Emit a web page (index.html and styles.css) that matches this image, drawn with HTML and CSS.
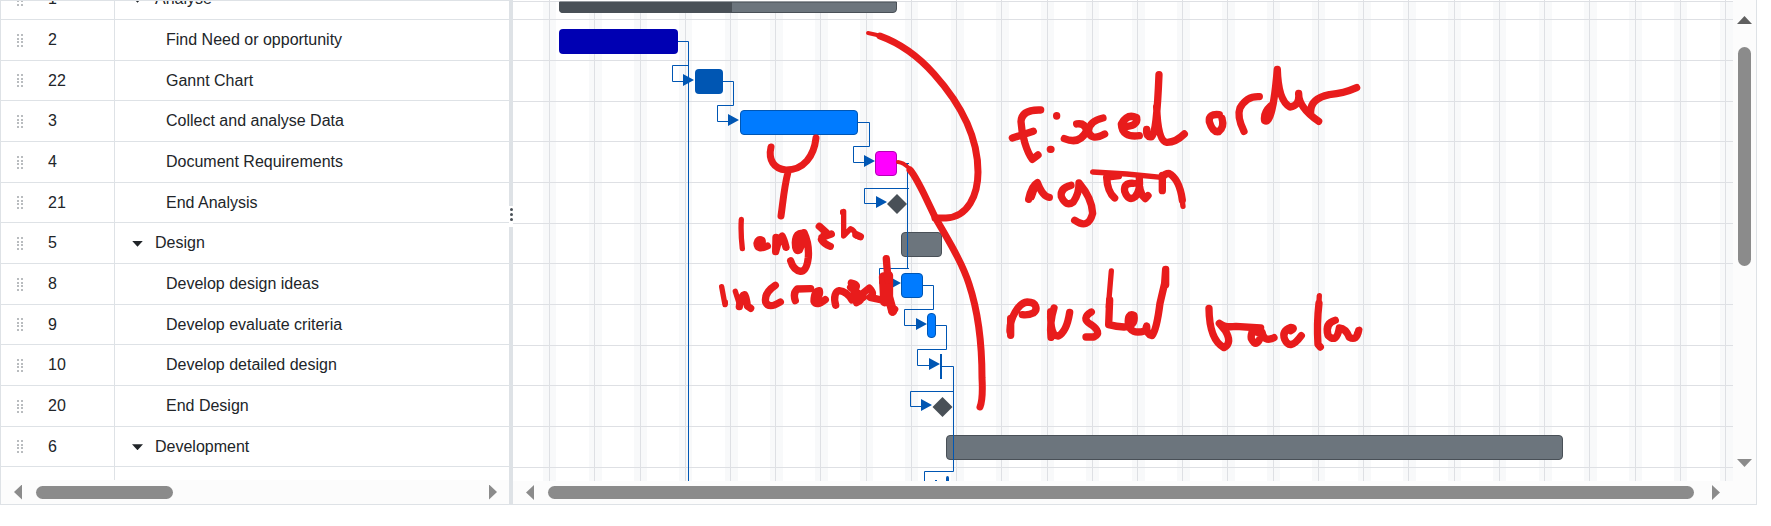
FILE: index.html
```html
<!DOCTYPE html>
<html lang="en">
<head>
<meta charset="utf-8">
<title>Gantt</title>
<link rel="stylesheet" href="styles.css">
</head>
<body>
<svg class="defs" width="0" height="0" aria-hidden="true">
  <symbol id="grip" viewBox="0 0 7 13"><path d="M0 0h2v2H0zM4 0h2v2H4zM0 4h2v2H0zM4 4h2v2H4zM0 7h2v2H0zM4 7h2v2H4zM0 11h2v2H0zM4 11h2v2H4z"/></symbol>
</svg>
<main class="gantt">
  <section class="tree">
    <div class="tree-view">
      <table class="tasks" aria-label="Tasks">
        <tbody>
          <tr><td class="drag"><svg class="grip"><use href="#grip"/></svg></td><td class="id">1</td><td class="name"><button class="toggle" aria-label="Collapse"></button>Analyse</td></tr>
          <tr><td class="drag"><svg class="grip"><use href="#grip"/></svg></td><td class="id">2</td><td class="name leaf">Find Need or opportunity</td></tr>
          <tr><td class="drag"><svg class="grip"><use href="#grip"/></svg></td><td class="id">22</td><td class="name leaf">Gannt Chart</td></tr>
          <tr><td class="drag"><svg class="grip"><use href="#grip"/></svg></td><td class="id">3</td><td class="name leaf">Collect and analyse Data</td></tr>
          <tr><td class="drag"><svg class="grip"><use href="#grip"/></svg></td><td class="id">4</td><td class="name leaf">Document Requirements</td></tr>
          <tr><td class="drag"><svg class="grip"><use href="#grip"/></svg></td><td class="id">21</td><td class="name leaf">End Analysis</td></tr>
          <tr><td class="drag"><svg class="grip"><use href="#grip"/></svg></td><td class="id">5</td><td class="name"><button class="toggle" aria-label="Collapse"></button>Design</td></tr>
          <tr><td class="drag"><svg class="grip"><use href="#grip"/></svg></td><td class="id">8</td><td class="name leaf">Develop design ideas</td></tr>
          <tr><td class="drag"><svg class="grip"><use href="#grip"/></svg></td><td class="id">9</td><td class="name leaf">Develop evaluate criteria</td></tr>
          <tr><td class="drag"><svg class="grip"><use href="#grip"/></svg></td><td class="id">10</td><td class="name leaf">Develop detailed design</td></tr>
          <tr><td class="drag"><svg class="grip"><use href="#grip"/></svg></td><td class="id">20</td><td class="name leaf">End Design</td></tr>
          <tr><td class="drag"><svg class="grip"><use href="#grip"/></svg></td><td class="id">6</td><td class="name"><button class="toggle" aria-label="Collapse"></button>Development</td></tr>
          <tr><td class="drag"></td><td class="id"></td><td class="name"></td></tr>
        </tbody>
      </table>
    </div>
    <div class="hbar tree-bar">
      <button class="arrow left" aria-label="Scroll left"></button>
      <div class="track"><div class="thumb short"></div></div>
      <button class="arrow right" aria-label="Scroll right"></button>
    </div>
  </section>

  <div class="splitter"><div class="handle"><i></i><i></i><i></i></div></div>

  <section class="chart">
    <div class="chart-main">
      <div class="chart-view">
        <svg class="canvas" width="1223" height="481" viewBox="513 0 1223 481" role="img" aria-label="Gantt chart">
          <path class="weekend" d="M549.5 2V481M595.5 2V481M640.5 2V481M685.5 2V481M731.5 2V481M776.5 2V481M821.5 2V481M866.5 2V481M911.5 2V481M957.5 2V481M1002.5 2V481M1047.5 2V481M1092.5 2V481M1138.5 2V481M1183.5 2V481M1228.5 2V481M1273.5 2V481M1318.5 2V481M1364.5 2V481M1409.5 2V481M1454.5 2V481M1499.5 2V481M1545.5 2V481M1590.5 2V481M1635.5 2V481M1680.5 2V481M1726.5 2V481"/>
          <path class="line" d="M513 1.5H1736.5V0M513 19.5H1733M513 60.5H1733M513 101.5H1733M513 141.5H1733M513 182.5H1733M513 223.5H1733M513 263.5H1733M513 304.5H1733M513 345.5H1733M513 385.5H1733M513 426.5H1733M513 467.5H1733"/>
          <path class="line" d="M549.5 0V481M594.5 0V481M640.5 0V481M685.5 0V481M730.5 0V481M775.5 0V481M820.5 0V481M866.5 0V481M911.5 0V481M956.5 0V481M1001.5 0V481M1047.5 0V481M1092.5 0V481M1137.5 0V481M1182.5 0V481M1227.5 0V481M1273.5 0V481M1318.5 0V481M1363.5 0V481M1408.5 0V481M1454.5 0V481M1499.5 0V481M1544.5 0V481M1589.5 0V481M1635.5 0V481M1680.5 0V481M1725.5 0V481"/>

          <path class="summary" d="M559.5 2V9q0 3.500 3.500 3.500H893q3.500 0 3.500 -3.500V2z"/>
          <path class="progress" d="M559 2V9q0 4 4 4H732V2z"/>
          <path class="cover" d="M555 0H900V1H555z"/>
          <rect class="navy" x="559" y="29" width="119" height="25" rx="4"/>
          <rect class="blue-dark" x="695" y="69" width="28" height="25" rx="4"/>
          <rect class="task" x="740.5" y="110.5" width="117" height="24" rx="3.5"/>
          <rect class="pink" x="875.5" y="151.5" width="21" height="24" rx="3.5"/>
          <path class="milestone" d="M897 194l10 10l-10 10l-10-10z"/>
          <rect class="summary" x="901.5" y="232.5" width="40" height="24" rx="3.5"/>
          <rect class="task" x="901.5" y="273.5" width="21" height="24" rx="3.5"/>
          <rect class="task" x="927.5" y="313.5" width="8" height="24" rx="3.5"/>
          <rect class="blue-dark" x="940" y="354" width="2" height="25"/>
          <path class="milestone" d="M942.5 397l10 10l-10 10l-10-10z"/>
          <rect class="summary" x="946.5" y="435.5" width="616" height="24" rx="3.5"/>
          <path class="blue-dark" d="M946 481v-3q0-2 1.5-2t1.5 2v3z"/>

          <path class="link" d="M678 41.5H688.5V481M688.5 65.5H672.5V81.5H684M723 81.5H733.5V105.5H717.5V121.5H729M858 122.5H869.5V146.5H853.5V162.5H865M897 163.5H909M907.5 163V268M909 188.5H864.5V203.5H877M909 268.5H879.5V283.5H891M923 285.5H933.5V309.5H904.5V325.5H917M936 325.5H946.5V349.5H917.5V365.5H930M942 366.5H953.5V471.5H924.5V481M953.5 391.5H910.5V406.5H922M935 480.5h2"/>
          <path class="tip" d="M683 74l11 6l-11 6zM728 114l11 6l-11 6zM864 155l11 6l-11 6zM876 196l11 6l-11 6zM890 277l11 6l-11 6zM916 318l11 6l-11 6zM929 358l11 6l-11 6zM921 399l11 6l-11 6z"/>

          <g class="ink">
            <path class="taper" d="M868 33C880 35 890 39 899 44"/>
            <path d="M880 36C902 44 918 56 934 74C960 103 978 136 978 172C978 195 968 217 946 218H935"/>
            <path class="taper" d="M898 162C906 163 911 170 916 178"/>
            <path d="M910 170C914 174 919 184 924 194L935 217C948 240 962 262 969 284C979 314 982 348 982 378C983 396 982 402 980 407"/>
            <path d="M771 147C768 160 774 169 786 170C804 170 814 156 816 138M788 172C784 188 783 202 781 216"/>
          </g>
          <g class="ink marks" transform="translate(700 200) scale(.3333)">
            <path class="thin" d="M124 58C122 90 124 120 127 146M428 35V38M431 34L431 108L452 86Q464 90 468 108L482 112"/>
            <path d="M172 134Q190 134 186 121Q175 114 171 130Q172 152 202 138M228 112L227 155Q237 112 246 108Q252 118 258 142"/>
            <path d="M312 100Q287 95 286 128Q286 156 298 150Q310 126 312 98Q328 132 325 172Q320 214 302 214Q280 210 272 182M294 108V140"/>
            <path d="M358 79L378 97L364 118Q372 132 391 139M366 112L394 102M468 104L481 110"/>
            <path class="thin" d="M65 260L75 314M76 306V312M106 274L120 318"/>
            <path d="M118 320Q122 286 134 284Q140 296 142 318L152 325M226 256Q192 278 197 306Q206 328 241 306M286 302Q278 280 292 267L332 266"/>
            <path d="M344 292Q362 290 358 272Q342 274 342 304Q350 320 376 299M407 316C400 290 406 274 418 272Q440 274 456 300M454 249Q480 254 462 270L470 308Q486 302 486 282L508 264Q526 282 510 292L545 300M452 262L490 292"/>
            <path class="bold" d="M550 230L554 306M566 226L566 290L578 334"/>
            <path d="M559 176L564 240M577 336L584 328"/>
          </g>
          <g class="ink marks" transform="translate(990 50) scale(.3333)">
            <path d="M152 180Q95 178 93 215C95 256 110 305 127 328L144 315M67 264L130 244M200 197v1M181 298h2"/>
            <path d="M260 222Q285 218 290 242Q270 285 223 266M339 204Q300 212 295 242Q302 275 344 252"/>
            <path d="M398 230Q446 230 440 203Q412 190 394 222Q396 264 448 257M470 238Q468 264 485 260Q500 252 507 74M500 170Q503 274 530 277Q556 278 583 252"/>
            <path d="M688 194Q655 190 658 215Q668 248 686 245Q704 232 696 205M762 244Q740 200 750 174Q770 138 808 140"/>
            <path d="M842 168Q820 188 824 212Q848 226 862 58Q865 152 900 171Q930 168 926 130Q925 172 986 214M962 188Q960 146 1018 134Q1062 130 1100 113"/>
            <path d="M116 448Q124 408 142 398Q158 440 178 442M124 440L134 412M243 406Q210 414 214 440Q228 472 250 456Q268 430 267 399Q306 445 308 490Q295 540 254 511"/>
            <path class="thin" d="M308 366L410 372L515 382M350 384L388 380"/>
            <path d="M350 382Q352 425 374 444M430 400Q400 398 404 424Q415 456 436 440Q452 420 448 385Q446 430 466 446L474 437M517 422V382Q526 370 536 370Q568 386 577 450M517 390V376"/>
            <path class="thin" d="M574 430L579 469"/>
          </g>
          <g class="ink marks" transform="translate(990 240) scale(.3333)">
            <path d="M62 286V235M60 275C58 235 86 188 112 186C140 186 144 208 130 219Q116 226 97 224"/>
            <path d="M192 204Q178 250 183 292M182 215Q180 290 205 288Q230 275 239 217M304 216Q272 235 302 253Q338 278 312 291H288"/>
            <path class="thin" d="M364 93L355 200"/>
            <path d="M359 180L356 254Q380 260 402 261Q438 258 432 226Q412 218 415 252Q422 286 466 272L470 258Q470 285 486 287Q500 270 510 190L524 130L527 88M527 92V134"/>
            <path d="M657 205Q658 300 702 323Q728 310 706 272L688 250Q704 264 738 259L812 264Q780 270 784 296Q802 332 816 276Q822 308 852 293M786 272L812 280"/>
            <path d="M902 272Q918 264 902 262Q875 272 884 298Q900 334 934 287M987 190Q980 250 984 313L991 321M1036 241Q1004 250 1014 286Q1040 312 1048 264Q1068 266 1078 292Q1100 304 1106 272"/>
            <path class="thin" d="M988 167L986 210M1100 280L1109 268"/>
          </g>
        </svg>
      </div>
      <div class="vbar">
        <button class="arrow up" aria-label="Scroll up"></button>
        <div class="vtrack"><div class="vthumb"></div></div>
        <button class="arrow down" aria-label="Scroll down"></button>
      </div>
    </div>
    <div class="hbar chart-bar">
      <button class="arrow left" aria-label="Scroll left"></button>
      <div class="track"><div class="thumb"></div></div>
      <button class="arrow right" aria-label="Scroll right"></button>
    </div>
  </section>
</main>
</body>
</html>
```
FILE: styles.css
```css
* { box-sizing: border-box; }
body {
  margin: 0;
  background: #fff;
  color: #212529;
  font: 16px/24px "Liberation Sans", Arial, sans-serif;
}
button { border: 0; padding: 0; background: none; }
.defs { display: none; }

.gantt {
  display: flex;
  margin-right: 14px;
  border: 1px solid #dee2e6;
  border-top: 0;
}

/* task tree */
.tree { width: 508px; flex: none; border-top: 1px solid #dee2e6; }
.tree-view { height: 479px; overflow: hidden; }
.tasks {
  width: 100%;
  margin-top: -22px;
  border-collapse: separate;
  border-spacing: 0;
  table-layout: fixed;
}
.tasks tr { height: 41px; }
.tasks tr:nth-child(3n) { height: 40px; }
.tasks td { padding: 0; border-bottom: 1px solid #dee2e6; vertical-align: middle; }
.drag { width: 34px; }
.tasks .drag { padding-left: 16px; }
.grip { display: block; width: 7px; height: 13px; fill: #b9bcbf; }
.id { width: 80px; }
.tasks .id { padding-left: 13px; border-right: 1px solid #dee2e6; }
.tasks .name { padding-left: 17px; }
.tasks .leaf { padding-left: 51px; }
.toggle {
  width: 11px;
  height: 6px;
  margin-right: 12px;
  vertical-align: middle;
  background: #212529;
  clip-path: polygon(0 0, 100% 0, 50% 100%);
}

/* splitter */
.splitter {
  width: 4px;
  flex: none;
  display: flex;
  flex-direction: column;
  background: #dee2e6;
}
.handle {
  margin-top: 206px;
  height: 21px;
  padding-top: 2px;
  display: flex;
  flex-direction: column;
  align-items: center;
  gap: 2px;
  background: #fff;
}
.handle i { width: 3px; height: 3px; border-radius: 2px; background: #495057; }

/* timeline */
.chart { flex: 1; min-width: 0; }
.chart-main { display: flex; height: 481px; }
.chart-view { flex: 1; min-width: 0; overflow: hidden; }
.canvas { display: block; }
.weekend { stroke: #f8f9fa; stroke-width: 13; }
.line { fill: none; stroke: #dee0e4; }
.summary { fill: #6c757d; stroke: #495057; }
.progress { fill: #495057; }
.cover { fill: #fff; }
.navy { fill: #0000b3; }
.blue-dark { fill: #0056b3; }
.task { fill: #007bff; stroke: #0056b3; }
.pink { fill: #ff00ff; stroke: #b300b3; }
.milestone { fill: #495057; }
.link { fill: none; stroke: #0056b3; }
.tip { fill: #0056b3; }
.ink { fill: none; stroke: #e81c1c; stroke-width: 7; stroke-linecap: round; stroke-linejoin: round; }
.ink .taper { stroke-width: 4; }
.marks { stroke-width: 22; }
.marks .thin { stroke-width: 16; }
.marks .bold { stroke-width: 27; }

/* scrollbars */
.hbar { display: flex; align-items: center; background: #fcfcfc; }
.tree-bar { height: 24px; padding: 0 12px 0 13px; }
.chart-bar { height: 23px; padding: 0 36px 0 13px; }
.track { flex: 1; margin: 0 18px 0 14px; }
.tree-bar .track { margin-right: 14px; }
.thumb { height: 13px; border-radius: 7px; background: #8b8b8b; }
.short { width: 137px; }
.arrow { flex: none; background: #8b8b8b; }
.left { width: 8px; height: 15px; clip-path: polygon(100% 0, 100% 100%, 0 50%); }
.right { width: 8px; height: 15px; clip-path: polygon(0 0, 100% 50%, 0 100%); }
.up { width: 15px; height: 8px; background: #606060; clip-path: polygon(50% 0, 100% 100%, 0 100%); }
.down { width: 15px; height: 8px; clip-path: polygon(0 0, 100% 0, 50% 100%); }
.vbar {
  width: 23px;
  flex: none;
  display: flex;
  flex-direction: column;
  align-items: center;
  padding: 16px 0 14px;
  background: #fcfcfc;
}
.vtrack { flex: 1; padding-top: 23px; }
.vthumb { width: 13px; height: 219px; border-radius: 7px; background: #8b8b8b; }
```
